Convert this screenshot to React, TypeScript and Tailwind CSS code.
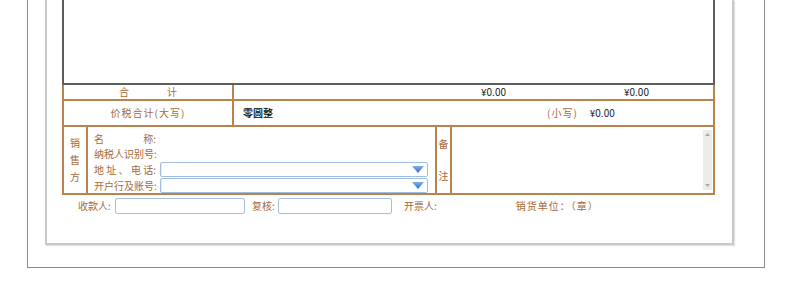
const brown = 'text-[#a4693a]';

function Tri() {
  return (
    <svg width="12" height="7" viewBox="0 0 12 7" className="shrink-0">
      <defs>
        <linearGradient id="tg" x1="0" y1="0" x2="0" y2="1">
          <stop offset="0" stopColor="#7fb0ea" />
          <stop offset="1" stopColor="#2f6fc8" />
        </linearGradient>
      </defs>
      <path d="M0 0 H12 L6 7 Z" fill="url(#tg)" />
    </svg>
  );
}

function Select() {
  return (
    <div className="flex h-[15px] w-[268px] items-center justify-end rounded-[2px] border border-[#9fbde3] bg-white pr-[3px] shadow-[inset_1px_0_0_#e8eef7]">
      <Tri />
    </div>
  );
}

function Label({ chars }: { chars: string[] }) {
  return (
    <div className="mr-[4px] flex w-[62px] justify-between">
      {chars.map((c, i) => (
        <span key={i}>{c}</span>
      ))}
    </div>
  );
}

export default function App() {
  const font = { fontFamily: '"Noto Sans CJK SC", "Liberation Sans", sans-serif' };
  return (
    <div className="relative h-[290px] w-[790px] overflow-hidden bg-white" style={font}>
      {/* outer frame */}
      <div className="ml-[27px] h-[268px] w-[738px] border-x border-b border-[#8a8a8a]">
        {/* inner panel */}
        <div className="ml-[17px] h-[245px] w-[689px] border-x-2 border-b-2 border-[#c9c9c9] shadow-[1px_1px_1px_#e2e2e2]">
          <div className="ml-[15px] w-[653px]">
            {/* items area */}
            <div className="h-[85px] border-x-2 border-b-2 border-[#5e5e5e] bg-white" />
            {/* 合计 */}
            <div className="flex h-[16px] border-x-2 border-b-2 border-[#b8834f] text-[10px] leading-none">
              <div className={`flex w-[170px] items-center justify-center gap-[38px] border-r-2 border-[#b8834f] ${brown}`}>
                <span>合</span>
                <span>计</span>
              </div>
              <div className="flex flex-1 items-center text-[#222]">
                <span className="ml-[247px]">¥0.00</span>
                <span className="ml-[118px]">¥0.00</span>
              </div>
            </div>
            {/* 价税合计 */}
            <div className="flex h-[26px] border-x-2 border-b-2 border-[#b8834f] text-[10px] leading-none">
              <div className={`flex w-[170px] items-center justify-center tracking-[1px] border-r-2 border-[#b8834f] ${brown}`}>
                价税合计(大写)
              </div>
              <div className="flex flex-1 items-center">
                <span className="ml-[9px] text-[10px] font-medium text-black">零圆整</span>
                <span className={`ml-[274px] tracking-[1px] ${brown}`}>(小写)</span>
                <span className="ml-[12px] text-[#222]">¥0.00</span>
              </div>
            </div>
            {/* 销售方 */}
            <div className="flex h-[68px] border-x-2 border-b-2 border-[#b8834f] text-[10px] leading-none">
              <div className={`flex w-[24px] flex-col items-center justify-center gap-[7px] border-r-2 border-[#b8834f] ${brown}`}>
                <span>销</span>
                <span>售</span>
                <span>方</span>
              </div>
              <div className={`flex w-[347px] flex-col gap-[1px] pl-[6px] pt-[5px] ${brown}`}>
                <div className="flex h-[15px] items-center">
                  <Label chars={['名', '称:']} />
                </div>
                <div className="flex h-[15px] items-center">
                  <Label chars={['纳', '税', '人', '识', '别', '号:']} />
                </div>
                <div className="flex h-[16px] items-center">
                  <Label chars={['地', '址', '、', '电', '话:']} />
                  <Select />
                </div>
                <div className="flex h-[16px] items-center">
                  <Label chars={['开', '户', '行', '及', '账', '号:']} />
                  <Select />
                </div>
              </div>
              <div className={`flex w-[17px] flex-col items-center justify-center gap-[22px] border-x-2 border-[#b8834f] ${brown}`}>
                <span>备</span>
                <span>注</span>
              </div>
              <div className="flex flex-1 justify-end py-[3px] pr-[1px]">
                <div className="flex w-[9px] flex-col items-center justify-between bg-[#ececec] py-[3px]">
                  <svg width="5" height="3" viewBox="0 0 5 3"><path d="M0 3 L2.5 0 L5 3Z" fill="#a9a9a9" /></svg>
                  <svg width="5" height="3" viewBox="0 0 5 3"><path d="M0 0 L2.5 3 L5 0Z" fill="#a9a9a9" /></svg>
                </div>
              </div>
            </div>
            {/* signatures */}
            <div className={`mt-[2px] flex h-[17px] items-center text-[10px] leading-none ${brown}`}>
              <span className="ml-[16px] w-[37px]">收款人:</span>
              <div className="h-[16px] w-[130px] rounded-[2px] border border-[#a7bfdc] bg-white" />
              <span className="ml-[7px] w-[26px]">复核:</span>
              <div className="h-[16px] w-[114px] rounded-[2px] border border-[#a7bfdc] bg-white" />
              <span className="ml-[12px]">开票人:</span>
              <span className="ml-[79px] tracking-[1px]">销货单位：（章）</span>
            </div>
          </div>
        </div>
      </div>
    </div>
  );
}
